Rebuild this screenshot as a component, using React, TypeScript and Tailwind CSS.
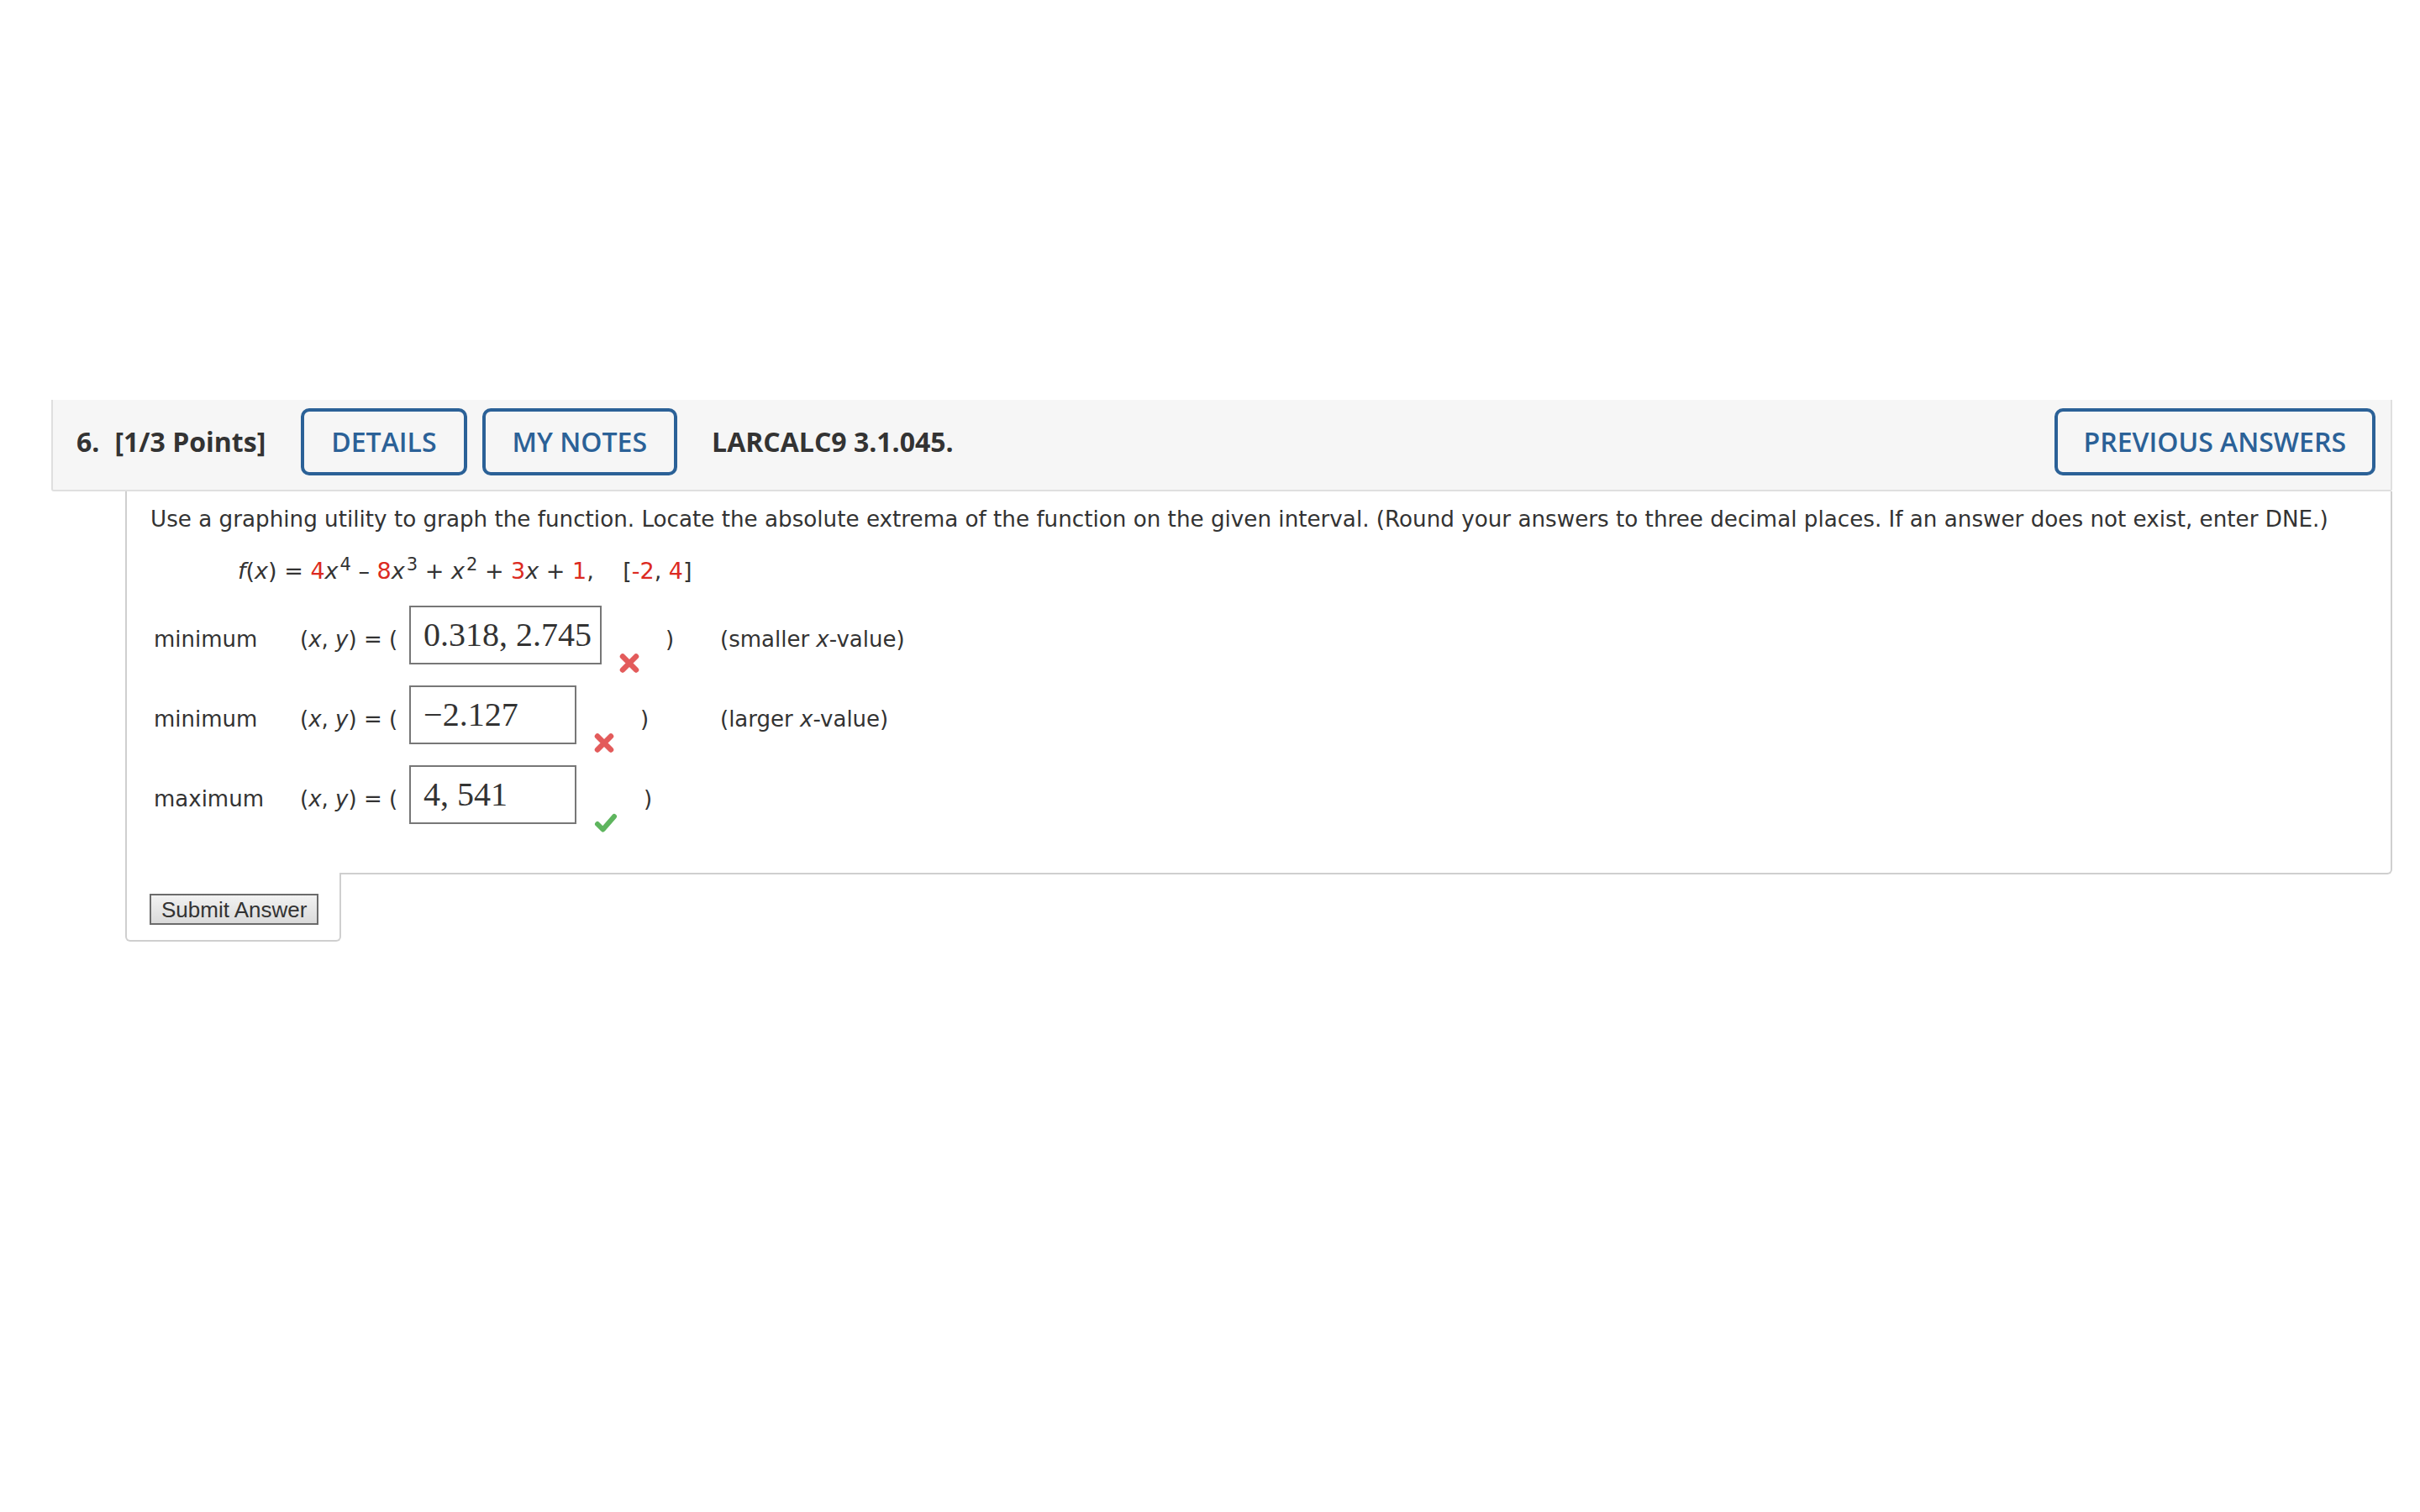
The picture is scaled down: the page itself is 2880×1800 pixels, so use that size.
import type { ReactNode } from "react";

const body = "font-['DejaVu_Sans',Verdana,sans-serif]";

function Red({ children }: { children: ReactNode }) {
  return <span className="text-[#dc2a21]">{children}</span>;
}

function Wrong() {
  return (
    <svg width="26" height="25" viewBox="0 0 26 25" className="shrink-0">
      <path d="M5 4.5 L21 20.5 M21 4.5 L5 20.5" stroke="#e35b5b" strokeWidth="6.5" strokeLinecap="round" />
    </svg>
  );
}

function Right() {
  return (
    <svg width="30" height="25" viewBox="0 0 30 25" className="shrink-0">
      <path d="M5 14 L11.5 20.5 L25 5" stroke="#5eb55e" strokeWidth="6" strokeLinecap="round" strokeLinejoin="round" fill="none" />
    </svg>
  );
}

function AnswerRow({
  label,
  value,
  ok,
  note,
  boxWidth,
}: {
  label: string;
  value: string;
  ok: boolean;
  note?: ReactNode;
  boxWidth: string;
}) {
  return (
    <div className="ml-[4px] flex h-[70px] text-[26px] text-[#333]">
      <div className="w-[174px] self-center pt-[10px]">{label}</div>
      <div className="flex w-[500px]">
        <div className="self-center pt-[10px]">
          (<i>x</i>, <i>y</i>) = (
        </div>
        <div
          className={`ml-[14px] flex h-[70px] items-center border-2 border-[#777] pl-[15px] font-['Liberation_Serif',serif] text-[40px] text-[#333] ${boxWidth}`}
        >
          {value}
        </div>
        <div className="ml-[20px] mt-[56px]">{ok ? <Right /> : <Wrong />}</div>
        <div className="ml-[30px] self-center pt-[10px]">)</div>
      </div>
      {note && <div className="self-center pt-[10px]">{note}</div>}
    </div>
  );
}

export default function App() {
  return (
    <div className="min-h-[1800px] bg-white pl-[61px] pr-[33px] pt-[476px]">
      {/* question header */}
      <div className="flex h-[109px] items-center rounded-b-[3px] border-x-2 border-b-2 border-[#dfdfdf] bg-[#f6f6f6] pb-[7px] pl-[28px] pr-[18px] font-['Open_Sans',sans-serif] text-[32px] text-[#333]">
        <span className="font-bold">6.</span>
        <span className="ml-[18px] font-bold">[1/3 Points]</span>
        <button className="ml-[42px] h-[80px] rounded-[10px] border-4 border-[#2b6197] px-[32px] font-semibold text-[#2b6197]">
          DETAILS
        </button>
        <button className="ml-[18px] h-[80px] rounded-[10px] border-4 border-[#2b6197] px-[32px] font-semibold text-[#2b6197]">
          MY NOTES
        </button>
        <span className="ml-[41px] font-bold">LARCALC9 3.1.045.</span>
        <button className="ml-auto h-[80px] rounded-[10px] border-4 border-[#2b6197] px-[31px] font-semibold text-[#2b6197]">
          PREVIOUS ANSWERS
        </button>
      </div>

      {/* question body */}
      <div className={`ml-[88px] ${body}`}>
        <div className="rounded-br-[6px] border-x-2 border-b-2 border-[#cfcfcf] pb-[58px] pl-[28px] pt-[17px]">
          <p className="text-[26.2px] leading-[32px] text-[#333]">
            Use a graphing utility to graph the function. Locate the absolute extrema of the function on the given
            interval. (Round your answers to three decimal places. If an answer does not exist, enter DNE.)
          </p>
          <p className="ml-[104px] mt-[30px] text-[27px] leading-[32px] text-[#333]">
            <i>f</i>(<i>x</i>) = <Red>4</Red>
            <i>x</i>
            <sup className="ml-[2px] text-[21px]">4</sup> – <Red>8</Red>
            <i>x</i>
            <sup className="ml-[2px] text-[21px]">3</sup> + <i>x</i>
            <sup className="ml-[2px] text-[21px]">2</sup> + <Red>3</Red>
            <i>x</i> + <Red>1</Red>,&nbsp;&nbsp;&nbsp; [<Red>-2</Red>, <Red>4</Red>]
          </p>

          <div className="mt-[25px] flex flex-col gap-[25px]">
            <AnswerRow
              label="minimum"
              value="0.318, 2.745"
              ok={false}
              boxWidth="w-[229px]"
              note={
                <>
                  (smaller <i>x</i>-value)
                </>
              }
            />
            <AnswerRow
              label="minimum"
              value="−2.127"
              ok={false}
              boxWidth="w-[199px]"
              note={
                <>
                  (larger <i>x</i>-value)
                </>
              }
            />
            <AnswerRow label="maximum" value="4, 541" ok={true} boxWidth="w-[199px]" />
          </div>
        </div>

        {/* submit tab */}
        <div className="relative -mt-[2px] h-[82px] w-[257px] rounded-b-[6px] border-x-2 border-b-2 border-[#cfcfcf] bg-white pl-[27px] pt-[25px]">
          <button className="h-[37px] border-2 border-[#6b6b6b] bg-gradient-to-b from-[#f2f2f2] to-[#dadada] px-[12px] font-['Liberation_Sans',Arial,sans-serif] text-[26px] leading-none text-[#333]">
            Submit Answer
          </button>
        </div>
      </div>
    </div>
  );
}
